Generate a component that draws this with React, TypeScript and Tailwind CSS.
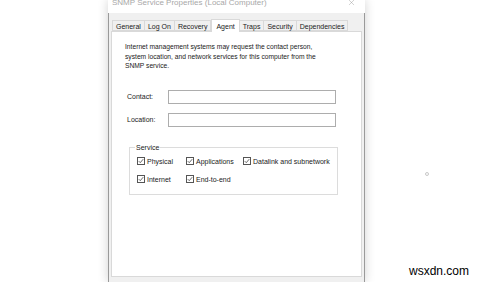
import { X } from 'lucide-react';

const tabs = ['General', 'Log On', 'Recovery', 'Agent', 'Traps', 'Security', 'Dependencies'];

export default function App() {
  return (
    <div className="relative w-[480px] h-[282px] overflow-hidden bg-white font-['Liberation_Sans',Arial,sans-serif] text-[#1a1a1a]">
      <div className="ml-[108px] w-[257px] h-full flex flex-col bg-[#f0f0f0] border-x border-[#9a9a9a] shadow-[0_0_10px_rgba(0,0,0,0.18)]">
        <TitleBar />
        <TabStrip />
        <AgentPage />
      </div>

      {/* stray dot on the desktop */}
      <div className="absolute left-[425px] top-[172px] w-[4px] h-[4px] rounded-full border border-[#c8c8c8]" />

      <div className="absolute left-[409px] top-[264px] text-[12px] leading-[14px] text-black font-['Liberation_Sans',Arial,sans-serif]">
        wsxdn.com
      </div>
    </div>
  );
}

function TitleBar() {
  return (
    <div className="h-[13px] bg-white flex items-start px-[4px] -mx-px">
      <span className="text-[8px] leading-[8px] -mt-[1px] text-[#a8a8a8] whitespace-nowrap">
        SNMP Service Properties (Local Computer)
      </span>
      <X size={9} strokeWidth={1} className="ml-auto mr-[5px] -mt-[2px] text-[#8a8a8a]" />
    </div>
  );
}

function TabStrip() {
  return (
    <div className="h-[18px] flex items-end pl-[3px] pt-[5px]">
      {tabs.map((t) => {
        const active = t === 'Agent';
        return (
          <div
            key={t}
            className={
              active
                ? 'h-[13px] -mb-px z-10 px-[4px] pt-[2px] bg-white border border-b-0 border-[#d9d9d9] text-[7px] leading-[9px] whitespace-nowrap'
                : 'h-[11px] px-[3px] pt-[1px] bg-[#f0f0f0] border border-[#d9d9d9] -ml-px first:ml-0 text-[7px] leading-[9px] whitespace-nowrap'
            }
          >
            {t}
          </div>
        );
      })}
    </div>
  );
}

function AgentPage() {
  return (
    <div className="flex-1 mx-[2px] mb-[5px] bg-white border border-[#d9d9d9] pl-[13px] pt-[10px] flex flex-col">
      <p className="text-[6.7px] leading-[9.5px] w-[200px]">
        Internet management systems may request the contact person,
        <br />
        system location, and network services for this computer from the
        <br />
        SNMP service.
      </p>

      <div className="mt-[19px] flex flex-col gap-[9px]">
        <Field label="Contact:" />
        <Field label="Location:" />
      </div>

      <fieldset className="mt-[17px] ml-[4px] w-[208px] h-[51px] border border-[#dcdcdc] px-[7px] pt-0">
        <legend className="text-[7px] leading-[8px] px-[1px] -ml-[2px]">Service</legend>
        <div className="grid grid-cols-[49px_57px_auto] gap-y-[9px] mt-[5px]">
          <Check label="Physical" />
          <Check label="Applications" />
          <Check label="Datalink and subnetwork" />
          <Check label="Internet" />
          <Check label="End-to-end" />
        </div>
      </fieldset>
    </div>
  );
}

function Field({ label }: { label: string }) {
  return (
    <div className="flex items-center">
      <span className="w-[43px] pl-[2px] text-[7px] leading-[9px]">{label}</span>
      <div className="w-[168px] h-[14px] border border-[#adadad] bg-white" />
    </div>
  );
}

function Check({ label }: { label: string }) {
  return (
    <div className="flex items-center gap-[2px]">
      <span className="w-[8px] h-[8px] border border-[#555] bg-white flex items-center justify-center">
        <svg viewBox="0 0 8 8" className="w-[6px] h-[6px]">
          <path d="M1 4.2 L3 6.2 L7 1.5" fill="none" stroke="#222" strokeWidth="0.9" />
        </svg>
      </span>
      <span className="text-[7px] leading-[9px] whitespace-nowrap">{label}</span>
    </div>
  );
}
